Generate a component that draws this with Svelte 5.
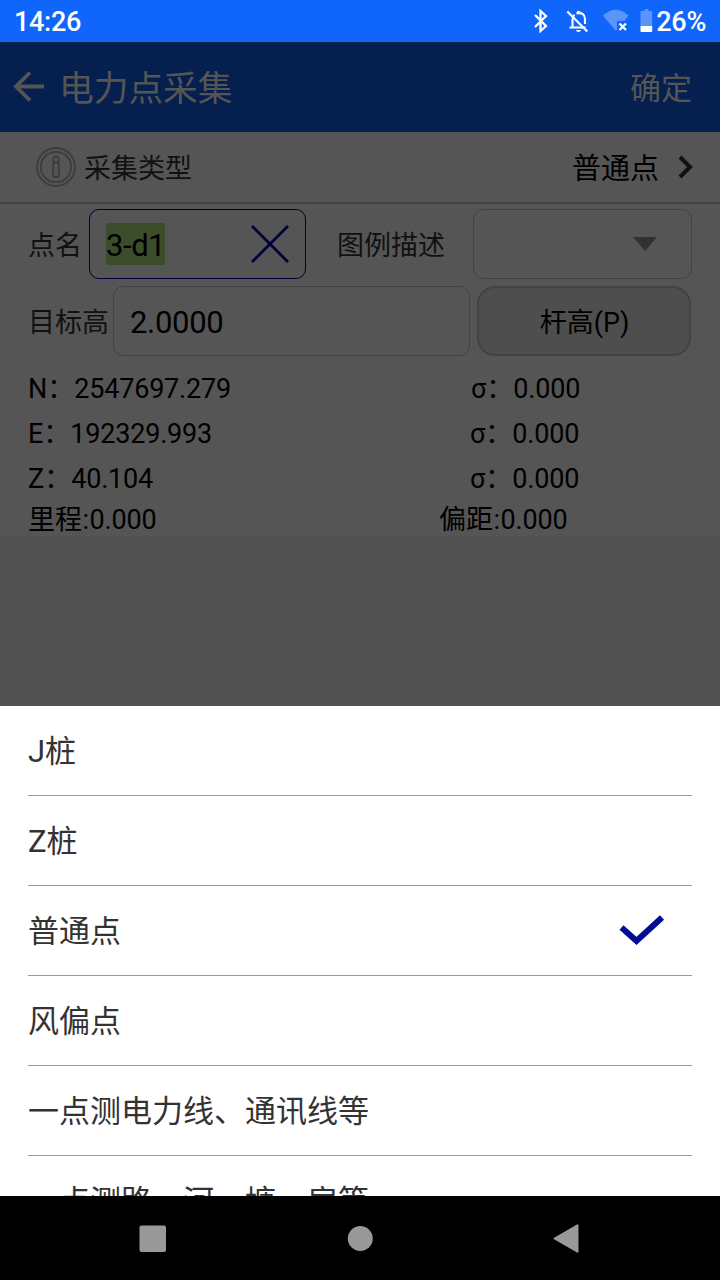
<script lang="ts">
  let pointName = "3-d1";
  let targetHeight = "2.0000";
  let selected = "普通点";

  const coords = [
    { label: "N", value: "2547697.279", sigma: "0.000" },
    { label: "E", value: "192329.993", sigma: "0.000" },
    { label: "Z", value: "40.104", sigma: "0.000" },
  ];

  const types = [
    "J桩",
    "Z桩",
    "普通点",
    "风偏点",
    "一点测电力线、通讯线等",
    "一点测路、河、塘、房等",
  ];
</script>

<div class="screen">
  <div class="status">
    <span class="time">14:26</span>
    <svg class="status-icons" width="116" height="42" viewBox="0 0 116 42">
      <path d="M5 15l11 11-5.500 5v-20l5.500 5-11 11" fill="none" stroke="#fff" stroke-width="2.300" />
      <g fill="none" stroke="#fff" stroke-width="2.100">
        <path d="M39.500 27.500h16M42.500 27.500v-8q0-3 2-4.700M46.500 13.500q8-1.800 8.500 5.500v5" />
        <path d="M37.300 11.500l20 20" />
      </g>
      <path d="M46.800 13v-1.500q1.700-1.700 3.400 0V13zM46 30h5q-.5 2-2.500 2t-2.500-2z" fill="#fff" />
      <path d="M73 15.500q12.500-11.500 25.500 0l-4 5.500h-7.500v9l-1.500.5z" fill="#5b95fb" />
      <path d="M89.500 23.500l6.500 6.500m0-6.500l-6.500 6.500" fill="none" stroke="#fff" stroke-width="2.200" />
    </svg>
    <svg class="battery" width="13" height="42" viewBox="0 0 13 42">
      <path d="M1.500 11h3V9h4v2h3q.7 0 .7.700V26H.500V12q0-1 1-1z" fill="#5b95fb" />
      <path d="M.500 26h11.700v5q0 1-1 1H1.500q-1 0-1-1z" fill="#fff" />
    </svg>
    <span class="percent">26%</span>
  </div>

  <header>
    <svg width="32" height="32" viewBox="0 0 32 32" fill="none" stroke="#555" stroke-width="3.800">
      <path d="M31 15.500H3M17 1.500l-14 14 14 14" />
    </svg>
    <h1>电力点采集</h1>
    <button class="confirm">确定</button>
  </header>

  <main>
    <div class="type-row">
      <svg width="40" height="40" viewBox="0 0 40 40" fill="none" stroke="#3c3c3c" stroke-width="1.800">
        <circle cx="20" cy="20" r="19" />
        <circle cx="20" cy="20" r="15.200" />
        <circle cx="20" cy="12.500" r="2.900" />
        <rect x="17.200" y="15.800" width="5.600" height="14.200" rx="1" />
      </svg>
      <span class="type-label">采集类型</span>
      <span class="type-value">{selected}</span>
      <svg class="chevron" width="16" height="24" viewBox="0 0 16 24" fill="none" stroke="#111" stroke-width="4">
        <path d="M3 2l10 10L3 22" />
      </svg>
    </div>

    <div class="form-row first">
      <span class="label">点名</span>
      <div class="field name-field">
        <span class="marked">{pointName}</span>
        <svg width="38" height="38" viewBox="0 0 38 38" stroke="#000038" stroke-width="2.800">
          <path d="M1 1l36 36M37 1L1 37" />
        </svg>
      </div>
      <span class="label legend">图例描述</span>
      <div class="field select-field">
        <svg width="24" height="14" viewBox="0 0 24 14" fill="#323232"><path d="M0 0h24L12 14z" /></svg>
      </div>
    </div>

    <div class="form-row second">
      <span class="label">目标高</span>
      <div class="field height-field"><span>{targetHeight}</span></div>
      <button class="pole">杆高(P)</button>
    </div>

    <div class="coords">
      {#each coords as row, i (row.label)}
        <div class="coord">
          <span>{row.label}：<span class="num">{row.value}</span></span>
          <span class="sigma" class:wide={i === 0}>σ：<span class="num">{row.sigma}</span></span>
        </div>
      {/each}
      <div class="coord mileage">
        <span>里程<span class="colon">:</span><span class="num">0.000</span></span>
        <span>偏距<span class="colon">:</span><span class="num">0.000</span></span>
      </div>
    </div>
  </main>

  <div class="backdrop"></div>

  <ul class="sheet">
    {#each types as type (type)}
      <li>
        <span>{type}</span>
        {#if type === selected}
          <svg width="46" height="32" viewBox="0 0 46 32" fill="none" stroke="#000b96" stroke-width="6">
            <path d="M2.500 12.500L17.500 26 43 2.500" />
          </svg>
        {/if}
      </li>
    {/each}
  </ul>

  <nav>
    <svg width="28" height="28" viewBox="0 0 28 28"><rect x="1.500" y=".5" width="26.500" height="26.500" rx="2" /></svg>
    <svg width="28" height="28" viewBox="0 0 28 28"><circle cx="15.300" cy="13.500" r="12.500" /></svg>
    <svg width="28" height="30" viewBox="0 0 28 30">
      <path d="M2.100 13.700L25 .500q1.500-.7 1.500 1v26q0 1.700-1.500 1L2.100 15.300q-1.200-.8 0-1.600z" />
    </svg>
  </nav>
</div>

<style>
  :global(body) { margin: 0; }
  .screen {
    width: 720px;
    height: 1280px;
    display: flex;
    flex-direction: column;
    overflow: hidden;
    background: #515151;
    font-family: Roboto, "Noto Sans CJK SC", sans-serif;
    color: #000;
  }
  svg { display: block; flex: none; }
  span { white-space: nowrap; }
  button { font-family: inherit; color: inherit; padding: 0; margin: 0; border: none; background: none; }

  .status {
    height: 42px;
    flex: none;
    display: flex;
    align-items: center;
    box-sizing: border-box;
    padding: 0 14px;
    background: #1066fa;
    color: #fff;
    font-size: 27px;
    font-weight: 500;
    line-height: 42px;
  }
  .time { letter-spacing: -0.3px; }
  .time, .percent { padding-top: 2px; }
  .status-icons { margin-left: auto; margin-right: -6px; }
  .battery { margin-right: 3px; }
  .percent { letter-spacing: -0.3px; }

  header {
    height: 90px;
    flex: none;
    display: flex;
    align-items: center;
    box-sizing: border-box;
    padding: 0 28px 0 13px;
    background: #05204f;
    color: #555;
  }
  h1 { margin: 0 0 0 14px; padding-top: 3px; font-size: 34.7px; font-weight: 400; line-height: 50px; }
  .confirm { margin-left: auto; padding-top: 4px; font-size: 31px; line-height: 46px; }

  main { height: 405px; flex: none; background: #555; }
  .type-row {
    height: 72px;
    box-sizing: border-box;
    display: flex;
    align-items: center;
    padding: 0 27px 0 36px;
    border-bottom: 2px solid #434343;
  }
  .type-label { margin-left: 8px; padding-bottom: 2px; font-size: 27px; color: #111; }
  .type-value { margin-left: auto; padding-bottom: 2px; font-size: 29px; }
  .chevron { margin-left: 18px; }

  .form-row { display: flex; align-items: center; height: 70px; padding: 0 28px; }
  .first { margin-top: 5px; }
  .second { margin-top: 7px; }
  .label { padding-bottom: 2px; font-size: 27px; color: #111; }
  .field {
    box-sizing: border-box;
    height: 70px;
    display: flex;
    align-items: center;
    border: 1px solid #434343;
    border-radius: 10px;
    padding: 0 16px;
    font-size: 31px;
    letter-spacing: -0.3px;
  }
  .name-field { width: 217px; margin-left: 7px; border-color: #00003a; justify-content: space-between; }
  .marked { background: #3c4d2c; box-sizing: border-box; height: 42px; padding-top: 2px; line-height: 42px; letter-spacing: -0.4px; }
  .legend { margin-left: 31px; }
  .select-field { width: 219px; margin-left: auto; justify-content: flex-end; padding-right: 34px; }
  .height-field { width: 357px; margin-left: 4px; }
  .height-field span { padding-top: 2px; }
  .pole {
    box-sizing: border-box;
    width: 214px;
    height: 70px;
    margin-left: 7px;
    padding: 0 0 2px 1px;
    border: 2px solid #434343;
    border-radius: 18px;
    background: #4e4e4e;
    font-size: 27px;
  }

  .coords { padding: 11px 28px 0; font-size: 27px; }
  .coord { display: grid; grid-template-columns: 442px 1fr; height: 45px; line-height: 45px; }
  .num { letter-spacing: -0.2px; }
  .colon { padding: 0 .5px; }
  .sigma.wide { padding-left: 1px; }
  .mileage { grid-template-columns: 411px 1fr; height: 36px; line-height: 36px; }

  .backdrop { height: 169px; flex: none; }

  .sheet {
    height: 490px;
    flex: none;
    margin: 0;
    padding: 0 28px;
    box-sizing: border-box;
    overflow: hidden;
    list-style: none;
    background: #fff;
    color: #333;
    font-size: 31px;
  }
  li {
    height: 90px;
    box-sizing: border-box;
    display: flex;
    align-items: center;
    justify-content: space-between;
    padding-right: 27px;
    border-bottom: 1px solid #999;
  }
  li span { padding-bottom: 5px; }

  nav {
    height: 84px;
    flex: none;
    display: flex;
    align-items: center;
    justify-content: space-between;
    box-sizing: border-box;
    padding: 1px 140px 0 138px;
    background: #000;
    fill: #999;
  }
</style>
